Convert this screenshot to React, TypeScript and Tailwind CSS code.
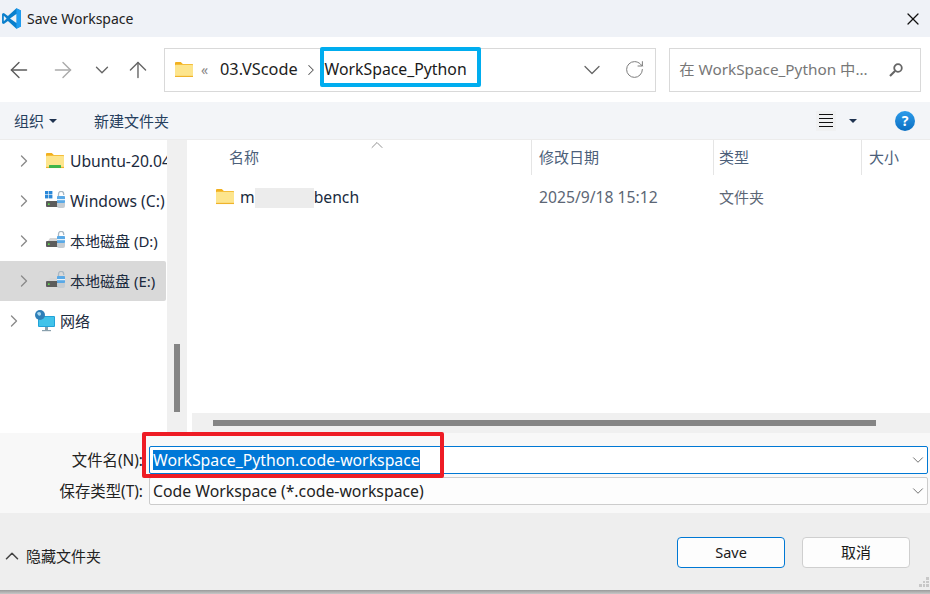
import React from "react";
import { ChevronDown, ChevronRight, ChevronUp, ArrowLeft, ArrowRight, ArrowUp, RotateCw, X } from "lucide-react";

const FONT = '"Noto Sans", "Noto Sans CJK SC", sans-serif';

function Folder({ w = 18, green = false }: { w?: number; green?: boolean }) {
  return (
    <svg width={w} height={w * 0.84} viewBox="0 0 18 15" className="shrink-0">
      <path d="M0 1.2C0 .5.5 0 1.2 0h4.6l2 2H17c.6 0 1 .4 1 1v2H0z" fill="#f2b01e" />
      <rect x="0" y="2.8" width="18" height="12.2" rx="0.8" fill="#fde58d" />
      <rect x="0" y="13.8" width="18" height="1.2" fill="#efb32b" />
      {green && <rect x="3" y="12" width="12" height="3" rx="0.5" fill="#3fb54a" />}
    </svg>
  );
}

function Drive({ windows = false }: { windows?: boolean }) {
  return (
    <svg width="20" height="20" viewBox="0 0 20 20" className="shrink-0">
      {windows && (
        <g fill="#2b88d8">
          <rect x="0" y="0" width="3.4" height="3.4" />
          <rect x="4" y="0" width="3.4" height="3.4" />
          <rect x="0" y="4" width="3.4" height="3.4" />
          <rect x="4" y="4" width="3.4" height="3.4" />
        </g>
      )}
      {!windows && <path d="M3 10l2-3h8v3z" fill="#d5d5d5" />}
      <rect x="1" y="10" width="14" height="6" rx="1" fill="#5c5c5c" />
      <rect x="3" y="12.4" width="1.6" height="1.6" fill="#5fe04a" />
      <path d="M13.5 5.5V3a2.6 2.6 0 0 1 5.2 0v1" fill="none" stroke="#a9b7c2" strokeWidth="1.3" />
      <rect x="12" y="5" width="8" height="7" rx="0.8" fill="#5aa9e6" />
      <rect x="12" y="8" width="8" height="1.2" fill="#e8f4fc" />
      <path d="M12 12h8v3a2 2 0 0 1-2 2h-4a2 2 0 0 1-2-2z" fill="#c5ccd2" />
    </svg>
  );
}

function Network() {
  return (
    <svg width="22" height="22" viewBox="0 0 22 22" className="shrink-0">
      <rect x="4" y="6" width="17" height="11" rx="1" fill="#22a2d8" />
      <rect x="5" y="7" width="15" height="9" fill="#41c3ea" />
      <rect x="11" y="17" width="3" height="3" fill="#8aa0ad" />
      <rect x="8" y="20" width="9" height="1.2" fill="#8aa0ad" />
      <circle cx="6" cy="5" r="5" fill="#2f7fb8" />
      <path d="M3 3c2-2 4-1 4 1s-2 2-3 1z" fill="#a7d8f0" />
    </svg>
  );
}

function Logo() {
  return (
    <svg width="21" height="21" viewBox="0 0 24 24" className="shrink-0">
      <path d="M17.6 0.3 7.9 9.2 3.2 5.6 1.2 6.6v10.8l2 1 4.7-3.6 9.7 8.9 5.2-2.5V2.8z" fill="#0a7fcc" />
      <path d="M17.6 0.3 22.8 2.8v18.4l-5.2 2.5z" fill="#1f9cf0" />
      <path d="M17.6 6.8 10.3 12l7.3 5.2zM3.2 8.8v6.4L6.4 12z" fill="#eff2f7" />
    </svg>
  );
}

function TreeRow({ icon, label, selected, outer, latin }: { icon: React.ReactNode; label: string; selected?: boolean; outer?: boolean; latin?: boolean }) {
  return (
    <div className={`h-10 flex items-center overflow-hidden whitespace-nowrap rounded-r-[2px] ${outer ? "pl-[4px]" : "pl-[14px]"} ${selected ? "bg-[#d9d9d9] w-[166px]" : ""}`}>
      <ChevronRight size={20} strokeWidth={1.6} className="text-[#8a8a8a] shrink-0" />
      <div className="w-5 ml-[11px] flex justify-center shrink-0">{icon}</div>
      <span className={`ml-[5px] text-[#1b2a3d] ${latin ? "text-[15.7px] pt-[2px]" : "text-[15px]"}`}>{label}</span>
    </div>
  );
}

export default function App() {
  return (
    <div className="relative w-[930px] h-[594px] overflow-hidden bg-white flex flex-col" style={{ fontFamily: FONT }}>
      {/* title */}
      <div className="h-[37px] bg-[#eff2f7] flex items-center pl-px shrink-0">
        <Logo />
        <span className="ml-[5px] text-[14px] text-[#222]">Save Workspace</span>
        <X size={20} strokeWidth={1.5} className="ml-auto mr-[7px] text-[#111]" />
      </div>

      {/* nav */}
      <div className="h-[65px] flex items-center shrink-0 pl-[6px] pr-[9px]">
        <ArrowLeft size={26} strokeWidth={1.3} className="text-[#5c5c5c]" />
        <ArrowRight size={26} strokeWidth={1.3} className="ml-[18px] text-[#aaaaaa]" />
        <ChevronDown size={22} strokeWidth={1.5} className="ml-[15px] text-[#666]" />
        <ArrowUp size={26} strokeWidth={1.3} className="ml-[12px] text-[#666]" />
        <div className="ml-[13px] w-[493px] h-[44px] border border-[#d9d9d9] flex items-center">
          <div className="ml-[10px]"><Folder w={18} /></div>
          <span className="ml-[8px] text-[14px] text-[#888]">«</span>
          <span className="ml-[12px] text-[16.3px] text-[#222]">03.VScode</span>
          <ChevronRight size={18} strokeWidth={1.4} className="ml-[4px] text-[#555]" />
          <span className="ml-[5px] text-[15.8px] text-[#1a1a1a]">WorkSpace_Python</span>
          <ChevronDown size={28} strokeWidth={1.1} className="ml-[111px] text-[#666]" />
          <RotateCw size={21} strokeWidth={1.1} className="ml-[18px] text-[#777]" />
        </div>
        <div className="ml-[13px] w-[252px] h-[44px] border border-[#d9d9d9] flex items-center pl-[9px]">
          <span className="text-[15.3px] text-[#777]">在 WorkSpace_Python 中...</span>
          <svg width="16" height="16" viewBox="0 0 16 16" className="ml-[20px]">
            <circle cx="10" cy="6" r="3.8" fill="none" stroke="#666" strokeWidth="1.8" />
            <path d="M7 9l-5 5" stroke="#666" strokeWidth="2.2" />
          </svg>
        </div>
      </div>

      {/* toolbar */}
      <div className="h-[38px] bg-[#f3f5f8] border-b border-[#ececec] flex items-center shrink-0 pl-[14px] pr-[15px]">
        <span className="text-[15px] text-[#26405e] pt-[2px]">组织</span>
        <span className="ml-[5px] w-0 h-0 border-x-[4px] border-x-transparent border-t-[4px] border-t-[#1f3350]" />
        <span className="ml-[37px] text-[15px] text-[#26405e] pt-[2px]">新建文件夹</span>
        <div className="ml-auto w-[20px] h-[20px] bg-[#f0f1f2] flex flex-col justify-center gap-[3px] px-[3px]">
          <span className="h-px bg-[#111]" /><span className="h-px bg-[#111]" /><span className="h-px bg-[#111]" /><span className="h-px bg-[#111]" />
        </div>
        <span className="ml-[13px] w-0 h-0 border-x-[4px] border-x-transparent border-t-[4px] border-t-[#1f3350]" />
        <span className="ml-[38px] w-5 h-5 rounded-full bg-gradient-to-b from-[#2c9cea] to-[#0a6fc2] text-white text-[14px] font-bold flex items-center justify-center">?</span>
      </div>

      {/* content */}
      <div className="h-[293px] flex shrink-0">
        <div className="w-[167px] pt-px shrink-0 overflow-hidden">
          <TreeRow icon={<Folder w={18} green />} label="Ubuntu-20.04" latin />
          <TreeRow icon={<Drive windows />} label="Windows (C:)" latin />
          <TreeRow icon={<Drive />} label="本地磁盘 (D:)" />
          <TreeRow icon={<Drive />} label="本地磁盘 (E:)" selected />
          <TreeRow icon={<Network />} label="网络" outer />
        </div>
        <div className="w-5 h-[293px] bg-[#f0f0f0] shrink-0 flex flex-col items-center justify-end pb-[21px]">
          <div className="w-[6px] h-[68px] bg-[#858585]" />
        </div>
        <div className="flex-1 min-w-0 flex flex-col ml-[5px]">
          <div className="flex-1 relative">
            <div className="h-[35px] flex text-[15px] text-[#4c607a]">
              <div className="w-[340px] border-r border-[#e5e5e5] pl-[37px] pt-[6px] relative">
                名称
                <ChevronUp size={20} strokeWidth={1.1} className="absolute left-[175px] -top-[5px] text-[#888]" />
              </div>
              <div className="w-[182px] border-r border-[#e5e5e5] pl-[7px] pt-[6px]">修改日期</div>
              <div className="w-[148px] border-r border-[#e5e5e5] pl-[5px] pt-[6px]">类型</div>
              <div className="pl-[7px] pt-[6px]">大小</div>
            </div>
            <div className="h-[44px] flex items-center pl-[24px]">
              <Folder w={18} />
              <span className="ml-[6px] text-[15.7px] text-[#1a2b40] flex items-center pt-[2px]">
                m
                <span className="w-[59px] h-[20px] bg-[#ececec]" />
                bench
              </span>
              <span className="absolute left-[347px] text-[15.7px] text-[#5c6675] pt-[2px]">2025/9/18 15:12</span>
              <span className="absolute left-[527px] text-[15px] text-[#5c6675]">文件夹</span>
            </div>
          </div>
          <div className="h-5 bg-[#f0f0f0] shrink-0 flex items-center pl-[21px]">
            <div className="w-[663px] h-[6px] bg-[#858585]" />
          </div>
        </div>
      </div>

      {/* form */}
      <div className="h-[80px] bg-[#f8f8f8] shrink-0 pt-[13px] pr-[2px] flex flex-col gap-[3px]">
        <div className="flex items-center">
          <span className="w-[145px] text-right text-[15.4px] text-[#222] pr-[2px] pt-[2px]">文件名(N):</span>
          <div className="ml-[4px] flex-1 h-[28px] bg-white border border-[#0078d4] rounded-[2px] flex items-center pl-[3px]">
            <span className="bg-[#0078d7] text-white text-[15.8px] leading-[20px]">WorkSpace_Python.code-workspace</span>
            <ChevronDown size={18} strokeWidth={1.1} className="ml-auto text-[#555]" />
          </div>
        </div>
        <div className="flex items-center">
          <span className="w-[145px] text-right text-[15.4px] text-[#222] pr-[2px] pt-[2px]">保存类型(T):</span>
          <div className="ml-[4px] flex-1 h-[28px] bg-[#fdfdfd] border border-[#cccccc] rounded-[2px] flex items-center pl-[3px]">
            <span className="text-[15.8px] text-[#222] pt-[2px]">Code Workspace (*.code-workspace)</span>
            <ChevronDown size={18} strokeWidth={1.1} className="ml-auto text-[#555]" />
          </div>
        </div>
      </div>

      {/* footer */}
      <div className="h-[77px] bg-[#eeeeee] shrink-0 flex items-center pl-px pr-[20px] pt-[2px] relative">
        <div className="flex items-center mt-[7px]">
          <ChevronUp size={22} strokeWidth={1.7} className="text-[#444]" />
          <span className="ml-[3px] text-[15px] text-[#222]">隐藏文件夹</span>
        </div>
        <button className="ml-auto w-[108px] h-[31px] bg-[#fdfdfd] border border-[#0078d4] rounded-[4px] text-[14.5px] text-[#1a1a1a]">Save</button>
        <button className="ml-[17px] w-[108px] h-[31px] bg-[#fdfdfd] border border-[#cfcfcf] rounded-[4px] text-[15px] text-[#1a1a1a]">取消</button>
        <div className="absolute right-px bottom-[3px] w-[10px] h-[10px] grid grid-cols-3 gap-px">
          <span /><span /><span className="bg-[#c8c8c8]" />
          <span /><span className="bg-[#c8c8c8]" /><span className="bg-[#c8c8c8]" />
          <span className="bg-[#c8c8c8]" /><span className="bg-[#c8c8c8]" /><span className="bg-[#c8c8c8]" />
        </div>
      </div>
      <div className="flex-1 bg-gradient-to-b from-[#9a9a9a] to-[#c8c8c8]" />

      {/* annotations */}
      <div className="absolute left-[320px] top-[47px] w-[161px] h-[40px] border-[4px] border-[#00adef] rounded-[2px]" />
      <div className="absolute left-[142px] top-[432px] w-[302px] h-[46px] border-[4px] border-[#ee1c25] rounded-[2px]" />
    </div>
  );
}
